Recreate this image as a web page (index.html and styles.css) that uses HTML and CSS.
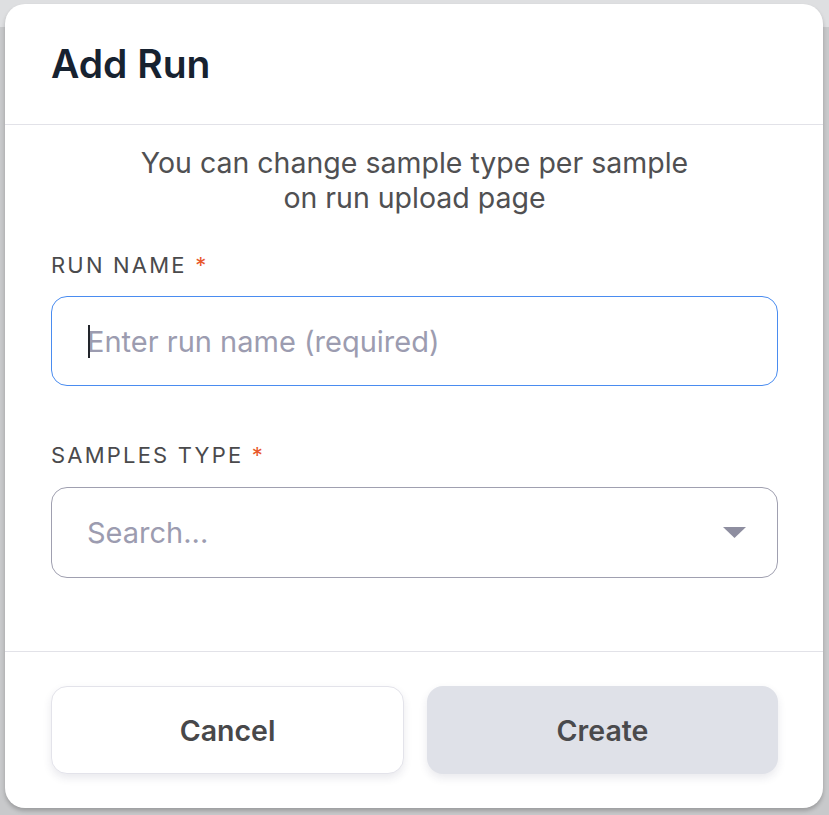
FILE: index.html
```html
<!DOCTYPE html>
<html lang="en">
<head>
<meta charset="utf-8">
<title>Add Run</title>
<link rel="stylesheet" href="styles.css">
</head>
<body>
<div class="backdrop">
  <div class="modal" role="dialog" aria-labelledby="modal-title">
    <header class="modal-header">
      <h1 id="modal-title" class="modal-title">Add Run</h1>
    </header>
    <div class="modal-body">
      <p class="hint">You can change sample type per sample<br>on run upload page</p>
      <label class="field-label" for="run-name">RUN NAME <span class="req">*</span></label>
      <div class="input-wrap">
        <input id="run-name" class="text-input is-focused" type="text" placeholder="Enter run name (required)">
        <span class="caret"></span>
      </div>
      <label class="field-label field-label--second" for="samples-type">SAMPLES TYPE <span class="req">*</span></label>
      <div class="select">
        <input id="samples-type" class="select-input" type="text" placeholder="Search...">
        <svg class="select-arrow" width="23" height="11" viewBox="0 0 23 11" aria-hidden="true"><path d="M0 0 H23 L11.5 11 Z" fill="#8e8ea0"/></svg>
      </div>
    </div>
    <footer class="modal-footer">
      <button class="btn btn-secondary" type="button">Cancel</button>
      <button class="btn btn-primary" type="button" disabled>Create</button>
    </footer>
  </div>
</div>
</body>
</html>
```
FILE: styles.css
```css
* { box-sizing: border-box; }
html, body { margin: 0; padding: 0; }
body {
  width: 829px;
  height: 815px;
  overflow: hidden;
  font-family: Inter, "Noto Sans", sans-serif;
  background: linear-gradient(#dedfe1 0 27px, #c8c9cb 27px);
}
.backdrop {
  padding: 4px 6px 7px 5px;
}
.modal {
  width: 818px;
  height: 804px;
  background: #ffffff;
  border-radius: 20px;
  box-shadow: 0 3px 4px rgba(0, 0, 0, 0.22);
  display: flex;
  flex-direction: column;
  overflow: hidden;
}
.modal-header {
  height: 121px;
  border-bottom: 1px solid #e2e2e8;
  padding: 0 46px;
  display: flex;
  align-items: center;
  flex-shrink: 0;
}
.modal-title {
  margin: 0;
  font-size: 39px;
  font-weight: 600;
  color: #172230;
  letter-spacing: 0;
  position: relative;
  top: -1px;
}
.modal-body {
  padding: 20px 45px 0 46px;
  display: flex;
  flex-direction: column;
  flex: 1;
  border-bottom: 1px solid #e2e2e8;
}
.hint {
  margin: 0;
  text-align: center;
  font-size: 28.5px;
  line-height: 35px;
  color: #505052;
}
.field-label {
  display: block;
  margin-top: 35px;
  font-size: 22px;
  line-height: 30px;
  letter-spacing: 2.2px;
  color: #4a4a4c;
}
.field-label--second { margin-top: 54px; }
.req { color: #e8572a; }
.input-wrap {
  position: relative;
  margin-top: 16px;
}
.text-input,
.select-input {
  display: block;
  width: 100%;
  height: 90px;
  border-radius: 16px;
  border: 1px solid #a0a0b0;
  padding: 0 35px;
  font-family: inherit;
  font-size: 29px;
  color: #2a2a2e;
  background: #fff;
  outline: none;
}
.text-input.is-focused { border-color: #4a8cf0; }
.text-input::placeholder,
.select-input::placeholder { color: #9c9cb0; opacity: 1; }
.caret {
  position: absolute;
  left: 37px;
  top: 29px;
  width: 2px;
  height: 33px;
  background: #22252b;
}
.select {
  position: relative;
  margin-top: 17px;
}
.select-input { height: 91px; }
.select-arrow {
  position: absolute;
  right: 32px;
  top: 40px;
}
.modal-footer {
  flex-shrink: 0;
  display: flex;
  gap: 23px;
  padding: 34px 45px 34px 46px;
}
.btn {
  flex: 1;
  height: 88px;
  border-radius: 16px;
  font-family: inherit;
  font-size: 28.5px;
  font-weight: 600;
  color: #48484a;
  cursor: pointer;
}
.btn-secondary {
  background: #fff;
  border: 1px solid #e3e3ea;
  box-shadow: 0 4px 8px rgba(40, 40, 80, 0.10);
}
.btn-primary {
  background: #dfe1e8;
  border: none;
  box-shadow: 0 4px 8px rgba(40, 40, 80, 0.10);
  color: #4a4a4c;
}
```
